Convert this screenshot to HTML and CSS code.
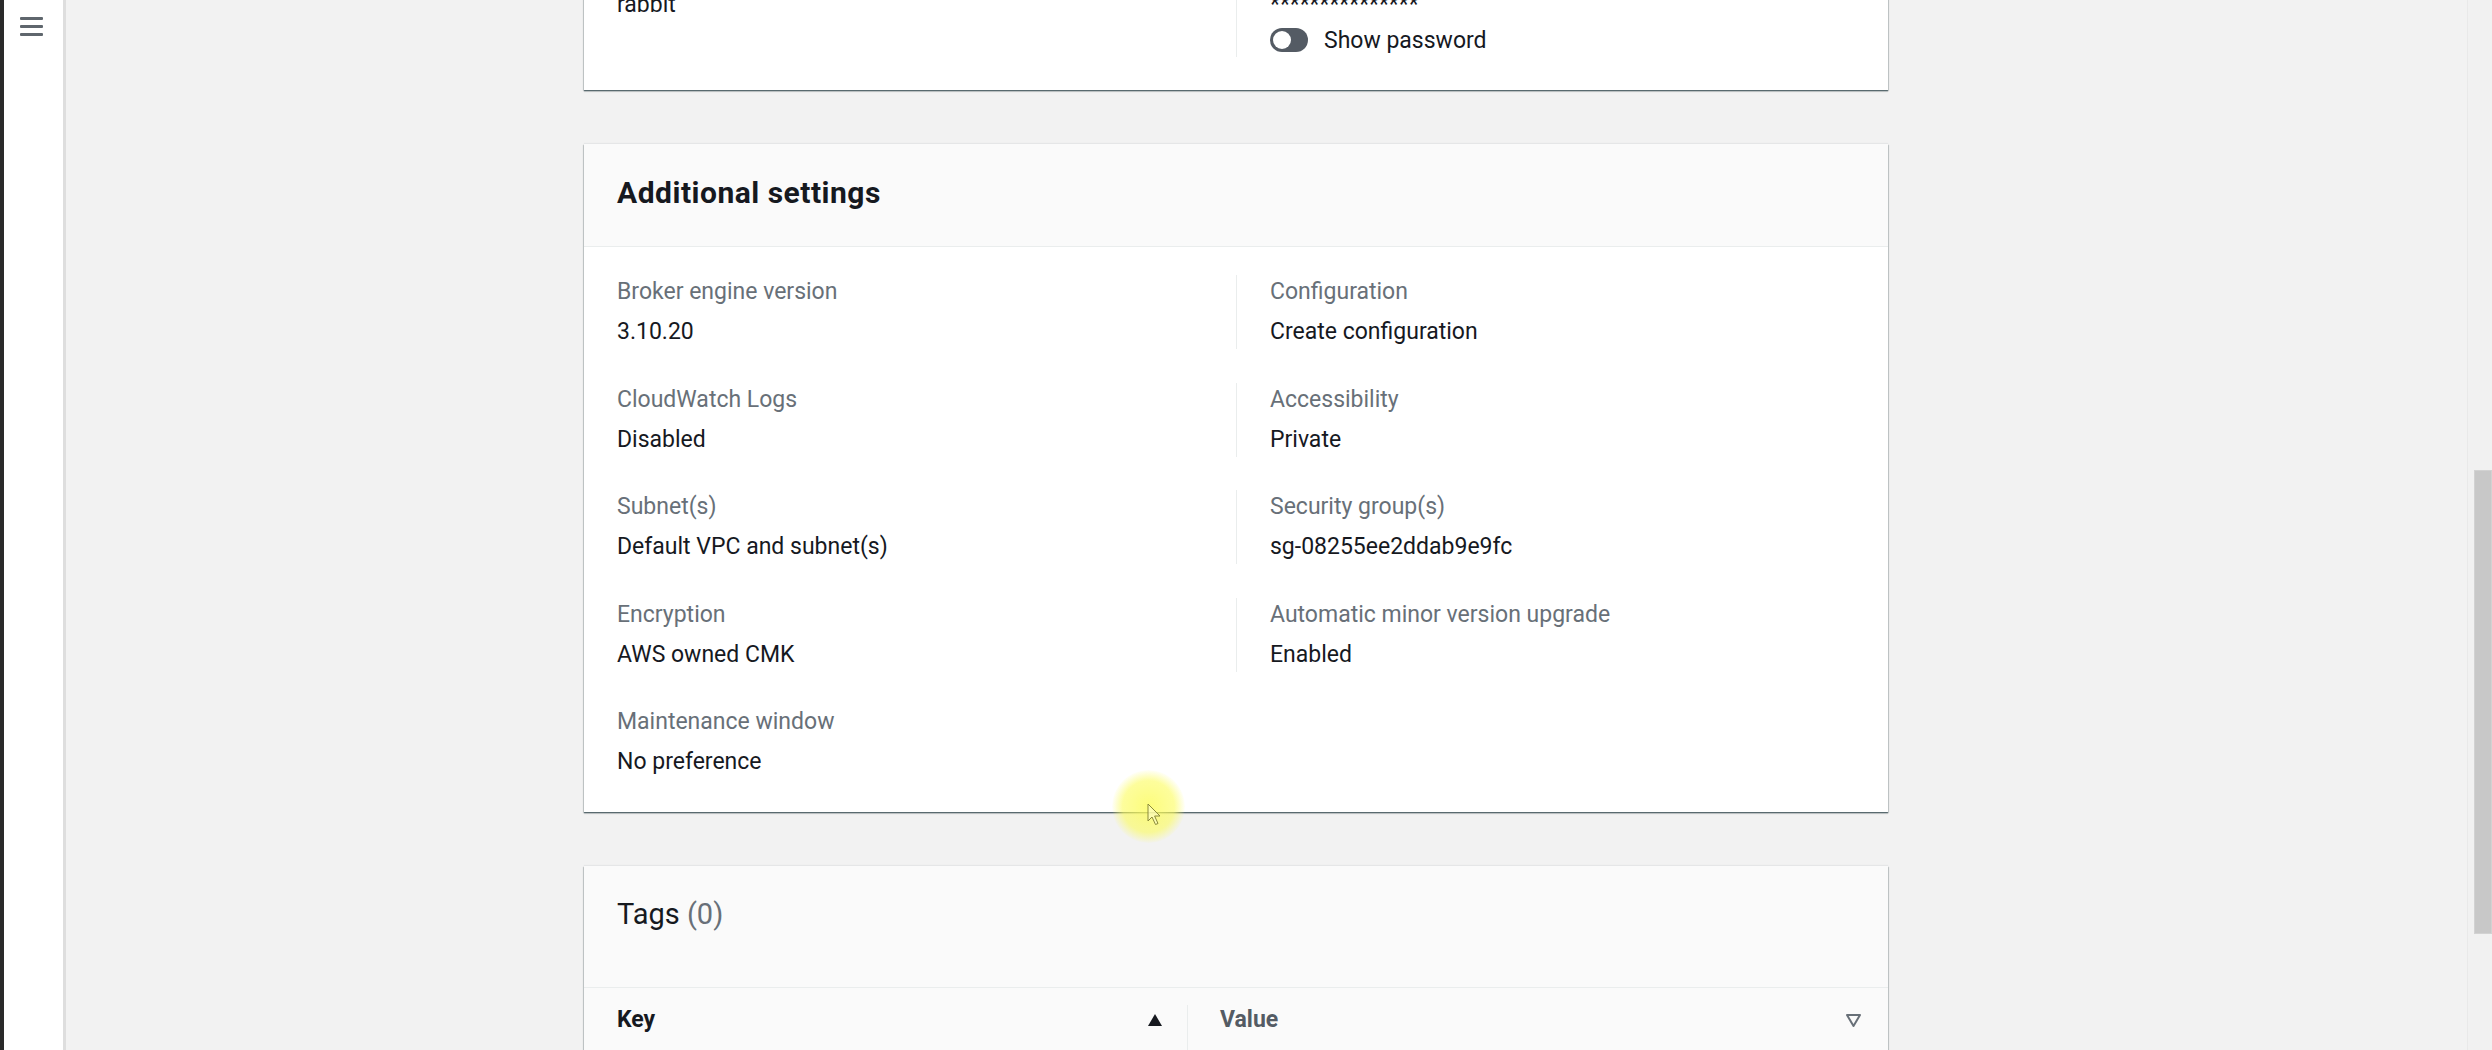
FILE: index.html
```html
<!DOCTYPE html>
<html lang="en">
<head>
<meta charset="utf-8">
<title>Review and create broker</title>
<link rel="stylesheet" href="styles.css">
</head>
<body>
<div class="app">
  <aside class="sidenav">
    <button class="menu" aria-label="Open navigation">
      <svg width="23" height="20" viewBox="0 0 23 20" aria-hidden="true">
        <rect x="0" y="0" width="23" height="3" rx="1"/>
        <rect x="0" y="8" width="23" height="3" rx="1"/>
        <rect x="0" y="16" width="23" height="3" rx="1"/>
      </svg>
    </button>
  </aside>

  <main class="content">
    <div class="stack">
      <section class="card">
        <div class="kv">
          <div class="cell">
            <div class="label">Username</div>
            <div class="value">rabbit</div>
          </div>
          <div class="cell cell-r">
            <div class="label">Password</div>
            <div class="value">***************</div>
            <div class="toggle-row">
              <span class="toggle"><span class="knob"></span></span>
              <span>Show password</span>
            </div>
          </div>
        </div>
      </section>

      <section class="card">
        <header class="card-header">
          <h2 class="title">Additional settings</h2>
        </header>
        <div class="kv">
          <div class="cell">
            <div class="label">Broker engine version</div>
            <div class="value">3.10.20</div>
          </div>
          <div class="cell cell-r">
            <div class="label">Configuration</div>
            <div class="value">Create configuration</div>
          </div>
          <div class="cell">
            <div class="label">CloudWatch Logs</div>
            <div class="value">Disabled</div>
          </div>
          <div class="cell cell-r">
            <div class="label">Accessibility</div>
            <div class="value">Private</div>
          </div>
          <div class="cell">
            <div class="label">Subnet(s)</div>
            <div class="value">Default VPC and subnet(s)</div>
          </div>
          <div class="cell cell-r">
            <div class="label">Security group(s)</div>
            <div class="value">sg-08255ee2ddab9e9fc</div>
          </div>
          <div class="cell">
            <div class="label">Encryption</div>
            <div class="value">AWS owned CMK</div>
          </div>
          <div class="cell cell-r">
            <div class="label">Automatic minor version upgrade</div>
            <div class="value">Enabled</div>
          </div>
          <div class="cell">
            <div class="label">Maintenance window</div>
            <div class="value">No preference</div>
          </div>
          <div class="cell"></div>
        </div>
      </section>

      <section class="card">
        <header class="card-header tags-header">
          <h2 class="title title-regular">Tags <span class="count">(0)</span></h2>
        </header>
        <div class="thead">
          <div class="th">
            <span>Key</span>
            <svg class="sort" width="16" height="14" viewBox="0 0 16 14" aria-hidden="true"><path d="M8 1 L15 13 L1 13 Z" fill="#16191f"/></svg>
          </div>
          <div class="th th-value">
            <span>Value</span>
            <svg class="sort" width="17" height="15" viewBox="0 0 17 15" aria-hidden="true"><path d="M2 2 L15 2 L8.5 13 Z" fill="none" stroke="#687078" stroke-width="2" stroke-linejoin="round"/></svg>
          </div>
        </div>
        <div class="empty">No tags</div>
      </section>
    </div>
  </main>
</div>

<div class="scrollbar"><div class="thumb" style="top:470px;height:464px"></div></div>

<div class="cursor-glow"></div>
<svg class="cursor" width="16" height="24" viewBox="0 0 16 24" aria-hidden="true">
  <path d="M1 1 L1 18 L5 14 L8.5 21.5 L11 20.5 L7.6 13 L13 13 Z" fill="rgba(255,255,210,0.55)" stroke="#8a8a3a" stroke-width="1" stroke-linejoin="round"/>
</svg>
</body>
</html>
```

FILE: styles.css
```css
* { box-sizing: border-box; }

html, body {
  margin: 0;
  height: 100%;
}

body {
  position: relative;
  overflow: hidden;
  background: #f2f2f2;
  color: #16191f;
  font-family: Roboto, "Liberation Sans", Arial, sans-serif;
}

.app {
  display: flex;
  height: 1050px;
}

.sidenav {
  flex: none;
  width: 66px;
  background: #fff;
  border-left: 4px solid #2a2a2a;
  border-right: 3px solid #dedede;
  padding: 17px 0 0 16px;
}

.menu {
  display: block;
  padding: 0;
  border: 0;
  background: none;
  fill: #5f666d;
}

.content {
  flex: 1;
  padding-left: 518px;
}

.stack {
  width: 1304px;
  margin-top: -80px;
  display: flex;
  flex-direction: column;
  gap: 54px;
}

.card {
  background: #fff;
  box-shadow:
    0 1px 1px 0 rgba(0, 28, 36, 0.45),
    0 2px 1px 0 rgba(0, 28, 36, 0.12),
    1px 1px 1px 0 rgba(0, 28, 36, 0.12),
    -1px 1px 1px 0 rgba(0, 28, 36, 0.12),
    0 -1px 1px 0 rgba(0, 28, 36, 0.05);
}

.card-header {
  background: #fafafa;
  padding: 29px 33px 33px;
  border-bottom: 1px solid #eaeded;
}

.tags-header {
  padding: 28px 33px 53px;
}

.title {
  margin: 0;
  font-size: 30px;
  line-height: 40px;
  font-weight: 700;
  letter-spacing: 0.5px;
  color: #16191f;
}

.title-regular {
  font-size: 29px;
  font-weight: 400;
  letter-spacing: 0;
}

.count {
  color: #687078;
}

.kv {
  display: grid;
  grid-template-columns: 1fr 1fr;
  row-gap: 33.5px;
  padding: 28px 33px 33px;
}

.cell {
  padding-right: 20px;
}

.cell-r {
  border-left: 1px solid #eaeded;
  padding-left: 33px;
}

.label {
  color: #687078;
  font-size: 23px;
  line-height: 34px;
}

.value {
  margin-top: 6px;
  font-size: 23px;
  line-height: 34px;
  color: #16191f;
}

.toggle-row {
  margin-top: 1px;
  height: 34px;
  display: flex;
  align-items: center;
  gap: 16px;
  font-size: 23px;
  color: #16191f;
}

.toggle {
  position: relative;
  width: 38px;
  height: 24px;
  border-radius: 12px;
  background: #545b64;
}

.knob {
  position: absolute;
  left: 3px;
  top: 3px;
  width: 18px;
  height: 18px;
  border-radius: 50%;
  background: #fff;
}

.thead {
  display: grid;
  grid-template-columns: 603px 1fr;
  background: #fafafa;
  border-bottom: 1px solid #eaeded;
}

.th {
  position: relative;
  display: flex;
  align-items: center;
  justify-content: space-between;
  padding: 15px 24px 17px 33px;
  font-size: 23px;
  line-height: 34px;
  font-weight: 700;
  color: #16191f;
}

.th-value {
  padding-right: 26px;
  color: #545b64;
}

.th-value::before {
  content: "";
  position: absolute;
  left: 0;
  top: 17px;
  bottom: 0;
  width: 1px;
  background: #eaeded;
}

.sort {
  display: block;
}

.empty {
  padding: 40px 33px;
  text-align: center;
  color: #687078;
  font-size: 23px;
}

.scrollbar {
  position: absolute;
  top: 0;
  right: 0;
  width: 25px;
  height: 1050px;
  background: #f1f1f1;
  border-left: 1px solid #e9e9e9;
}

.thumb {
  position: absolute;
  right: 0;
  width: 18px;
  background: #c8c8c8;
  border: 1px solid #d2d2d2;
}

.cursor-glow {
  position: absolute;
  left: 1112px;
  top: 770px;
  width: 73px;
  height: 73px;
  border-radius: 50%;
  background: radial-gradient(circle, rgba(252, 252, 90, 0.8) 0%, rgba(252, 252, 90, 0.6) 50%, rgba(252, 252, 90, 0) 72%);
}

.cursor {
  position: absolute;
  left: 1147px;
  top: 803px;
}
```
